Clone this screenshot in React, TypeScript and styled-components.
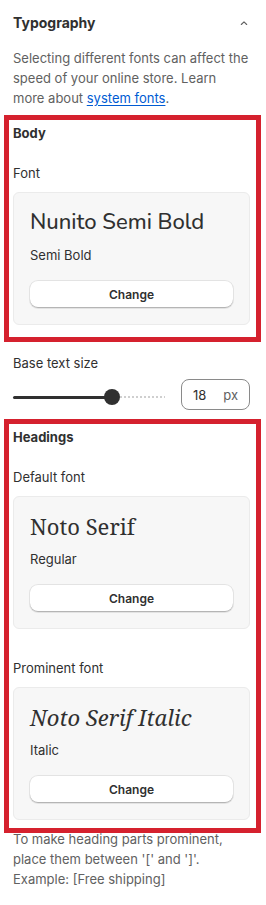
import React from "react";
import styled, { createGlobalStyle } from "styled-components";

const GlobalStyle = createGlobalStyle`
  html, body {
    margin: 0;
    padding: 0;
    background: #ffffff;
  }
  body {
    font-family: Inter, "Noto Sans", "Liberation Sans", sans-serif;
    color: #303030;
    -webkit-font-smoothing: antialiased;
  }
`;

const Panel = styled.div`
  width: 266px;
  box-sizing: border-box;
  padding: 13px 16px 20px 13px;
  display: flex;
  flex-direction: column;
`;

const Header = styled.div`
  display: flex;
  align-items: center;
  justify-content: space-between;
  height: 20px;
`;

const Title = styled.h2`
  margin: 0;
  font-size: 14px;
  line-height: 20px;
  font-weight: 650;
  color: #303030;
`;

const Chevron = styled.svg`
  width: 12px;
  height: 12px;
  color: #616161;
`;

const Description = styled.p`
  margin: 15px 0 0;
  font-size: 13px;
  line-height: 20px;
  color: #616161;

  a {
    color: #005bd3;
    text-decoration: underline;
    text-underline-offset: 2px;
  }
`;

const Highlight = styled.section<{ $top: number; $bottom: number }>`
  margin: ${(p) => p.$top}px -6px 0 -4px;
  padding: 3px 6px ${(p) => p.$bottom}px 4px;
  outline: 5px solid #d5212e;
  display: flex;
  flex-direction: column;
`;

const GroupTitle = styled.div`
  font-size: 13px;
  line-height: 20px;
  font-weight: 650;
  color: #303030;
`;

const Label = styled.div<{ $gap: number }>`
  margin-top: ${(p) => p.$gap}px;
  font-size: 13px;
  line-height: 20px;
  color: #303030;
`;

const Card = styled.div`
  margin-top: 9px;
  box-sizing: border-box;
  background: #f7f7f7;
  border: 1px solid #ebebeb;
  border-radius: 6px;
  padding: 14px 16px 16px 16px;
  display: flex;
  flex-direction: column;
`;

const FontName = styled.div<{ $family: string; $italic?: boolean; $size: number; $weight?: number }>`
  font-family: ${(p) => p.$family};
  font-style: ${(p) => (p.$italic ? "italic" : "normal")};
  font-size: ${(p) => p.$size}px;
  font-weight: ${(p) => p.$weight ?? 400};
  line-height: 30px;
  color: #303030;
  white-space: nowrap;
`;

const Variant = styled.div`
  margin-top: 8px;
  font-size: 13px;
  line-height: 20px;
  color: #303030;
`;

const ChangeButton = styled.button`
  margin-top: 16px;
  height: 27px;
  width: 100%;
  border: none;
  border-radius: 8px;
  background: #ffffff;
  box-shadow: 0 0 0 1px #e3e3e3, inset 0 -1px 0 #b5b5b5;
  font-family: Inter, "Noto Sans", sans-serif;
  font-size: 12px;
  font-weight: 600;
  color: #303030;
  cursor: pointer;
`;

const SliderRow = styled.div`
  margin-top: 6px;
  display: flex;
  align-items: center;
  justify-content: space-between;
  height: 31px;
`;

const Track = styled.div`
  position: relative;
  width: 152px;
  height: 16px;
  margin-top: 5px;
  display: flex;
  align-items: center;
`;

const TrackFill = styled.div`
  height: 3px;
  border-radius: 2px;
  background: #303030;
`;

const TrackRest = styled.div`
  flex: 1;
  height: 2px;
  background-image: linear-gradient(to right, #cfcfcf 50%, transparent 50%);
  background-size: 4px 2px;
`;

const Thumb = styled.div`
  position: absolute;
  top: 0;
  width: 16px;
  height: 16px;
  border-radius: 50%;
  background: #303030;
  transform: translateX(-50%);
`;

const NumberBox = styled.div`
  width: 69px;
  height: 31px;
  box-sizing: border-box;
  border: 1px solid #8a8a8a;
  border-radius: 8px;
  display: flex;
  align-items: center;
  padding: 0 11px 0 11px;
  font-size: 13px;
  color: #303030;

  span:last-child {
    margin-left: auto;
    color: #616161;
  }
`;

const Footer = styled.p`
  margin: 1px 0 0;
  font-size: 13px;
  line-height: 20px;
  color: #616161;
`;

type FontCardProps = {
  name: string;
  family: string;
  variant: string;
  italic?: boolean;
  size: number;
  weight?: number;
};

const FontCard = ({ name, family, variant, italic, size, weight }: FontCardProps) => (
  <Card>
    <FontName $family={family} $italic={italic} $size={size} $weight={weight}>
      {name}
    </FontName>
    <Variant>{variant}</Variant>
    <ChangeButton type="button">Change</ChangeButton>
  </Card>
);

const serif = `"Noto Serif", "DejaVu Serif", "Liberation Serif", serif`;

const App = () => {
  const percent = 65;
  return (
    <>
      <GlobalStyle />
      <Panel>
        <Header>
          <Title>Typography</Title>
          <Chevron viewBox="0 0 20 20" fill="none">
            <path
              d="M5.5 12.5 10 8l4.5 4.5"
              stroke="currentColor"
              strokeWidth="1.8"
              strokeLinecap="round"
              strokeLinejoin="round"
            />
          </Chevron>
        </Header>
        <Description>
          Selecting different fonts can affect the speed of your online store. Learn
          more about <a href="#">system fonts</a>.
        </Description>

        <Highlight $top={12} $bottom={12}>
          <GroupTitle>Body</GroupTitle>
          <Label $gap={20}>Font</Label>
          <FontCard
            name="Nunito Semi Bold"
            family={`"Nunito", Lato, "Noto Sans", sans-serif`}
            variant="Semi Bold"
            size={22}
            weight={500}
          />
        </Highlight>

        <Label $gap={16}>Base text size</Label>
        <SliderRow>
          <Track>
            <TrackFill style={{ width: `${percent}%` }} />
            <TrackRest />
            <Thumb style={{ left: `${percent}%` }} />
          </Track>
          <NumberBox>
            <span>18</span>
            <span>px</span>
          </NumberBox>
        </SliderRow>

        <Highlight $top={14} $bottom={8}>
          <GroupTitle>Headings</GroupTitle>
          <Label $gap={20}>Default font</Label>
          <FontCard name="Noto Serif" family={serif} variant="Regular" size={22} />
          <Label $gap={29}>Prominent font</Label>
          <FontCard name="Noto Serif Italic" family={serif} variant="Italic" italic size={22} />
        </Highlight>

        <Footer>
          To make heading parts prominent, place them between '[' and ']'.
          Example: [Free shipping]
        </Footer>
      </Panel>
    </>
  );
};

export default App;
